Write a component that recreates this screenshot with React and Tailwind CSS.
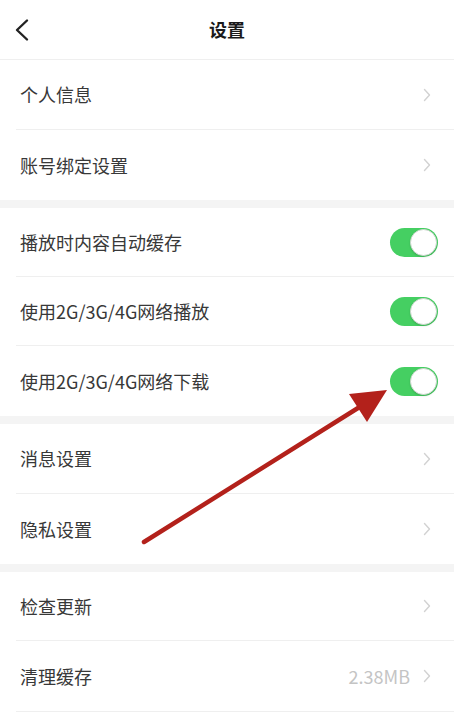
import React from "react";

const font = { fontFamily: '"Noto Sans CJK SC", "Noto Sans", sans-serif' };

function Chevron() {
  return (
    <svg width="8" height="14" viewBox="0 0 8 14" className="shrink-0">
      <path d="M1.5 1.5 L6.5 7 L1.5 12.5" fill="none" stroke="#d2d2d2" strokeWidth="1.4" strokeLinecap="round" strokeLinejoin="round" />
    </svg>
  );
}

function Toggle() {
  return (
    <div className="w-[48px] h-[29px] rounded-full bg-[#45cf62] relative shrink-0">
      <div className="absolute right-[1px] top-[1px] w-[27px] h-[27px] rounded-full bg-white border border-[#cfd8d0] shadow-[0_1px_2px_rgba(0,0,0,0.15)]" />
    </div>
  );
}

function Row({ label, h = "h-[70px]", divider = true, right }) {
  return (
    <div className={`ml-4 ${h} flex items-center pl-1 pr-[23px] ${divider ? "border-b border-[#efefef]" : ""}`}>
      <span className="flex-1 text-[18px] text-[#383838]">{label}</span>
      {right}
    </div>
  );
}

function ToggleRow({ label, h, divider = true }) {
  return (
    <div className={`ml-4 ${h} flex items-center pl-1 pr-4 ${divider ? "border-b border-[#efefef]" : ""}`}>
      <span className="flex-1 text-[18px] text-[#383838]">{label}</span>
      <Toggle />
    </div>
  );
}

export default function App() {
  return (
    <div className="relative w-[454px] h-[712px] overflow-hidden bg-[#f4f4f4]" style={font}>
      <div className="h-[60px] bg-white border-b border-[#efefef] flex items-center">
        <div className="w-[60px] pl-[14px] flex items-center">
          <svg width="16" height="24" viewBox="0 0 16 24">
            <path d="M13 2.5 L3 12 L13 21.5" fill="none" stroke="#222222" strokeWidth="2.4" strokeLinecap="round" strokeLinejoin="round" />
          </svg>
        </div>
        <div className="flex-1 text-center text-[18px] font-bold text-[#1a1a1a]">设置</div>
        <div className="w-[60px]" />
      </div>

      <div className="bg-white">
        <Row label="个人信息" h="h-[70px]" right={<Chevron />} />
        <Row label="账号绑定设置" h="h-[70px]" divider={false} right={<Chevron />} />
      </div>

      <div className="bg-white mt-2">
        <ToggleRow label="播放时内容自动缓存" h="h-[69px]" />
        <ToggleRow label="使用2G/3G/4G网络播放" h="h-[69px]" />
        <ToggleRow label="使用2G/3G/4G网络下载" h="h-[70px]" divider={false} />
      </div>

      <div className="bg-white mt-2">
        <Row label="消息设置" h="h-[70px]" right={<Chevron />} />
        <Row label="隐私设置" h="h-[70px]" divider={false} right={<Chevron />} />
      </div>

      <div className="bg-white mt-2">
        <Row label="检查更新" h="h-[69px]" right={<Chevron />} />
        <Row
          label="清理缓存"
          h="h-[71px]"
          right={
            <div className="flex items-center gap-[13px]">
              <span className="text-[18px] text-[#c4c4c4]">2.38MB</span>
              <Chevron />
            </div>
          }
        />
      </div>

      <svg className="absolute inset-0 pointer-events-none" width="454" height="712" viewBox="0 0 454 712">
        <line x1="144" y1="542" x2="366" y2="403" stroke="#b3211b" strokeWidth="4.5" strokeLinecap="round" />
        <polygon points="387,390 349,394 367,422" fill="#b3211b" />
      </svg>
    </div>
  );
}
